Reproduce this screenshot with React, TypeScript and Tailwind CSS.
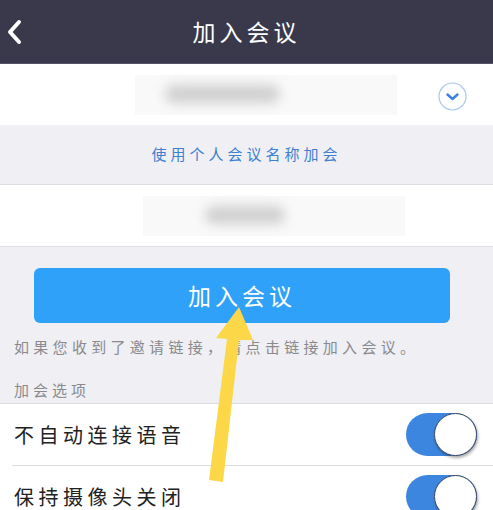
import React from 'react';

const font = { fontFamily: '"Noto Sans CJK SC", "Noto Sans", sans-serif' };

function Toggle() {
  return (
    <div className="relative h-[43px] w-[71px] rounded-full bg-[#3d86e0]">
      <div className="absolute right-0 top-0 h-[43px] w-[43px] rounded-full border border-[#3b4a66] bg-white shadow-[1px_2px_3px_rgba(0,0,0,0.35)]" />
    </div>
  );
}

function BlurField({ blob }: { blob: string }) {
  return (
    <div className="relative h-[40px] w-[262px] bg-[#f9f9f9]">
      <div className={`absolute top-[10px] h-[18px] rounded-full bg-[#cfcfcf] blur-[6px] ${blob}`} />
    </div>
  );
}

export default function App() {
  return (
    <div className="relative h-[510px] w-[493px] overflow-hidden bg-[#efeff4]" style={font}>
      {/* 顶部栏 */}
      <div className="relative flex h-16 items-center justify-center border-b border-[#55546a] bg-[#3a394c]">
        <svg className="absolute left-[6px] top-[19px]" width="16" height="26" viewBox="0 0 16 26">
          <path d="M13 3 L4 13 L13 23" fill="none" stroke="white" strokeWidth="4" strokeLinecap="round" strokeLinejoin="round" />
        </svg>
        <span className="text-[23px] tracking-[4px] text-white">加入会议</span>
      </div>

      {/* 会议号 */}
      <div className="relative flex h-[61px] items-center bg-white pl-[135px]">
        <BlurField blob="left-[30px] w-[115px]" />
        <svg className="absolute left-[438px] top-[18px]" width="29" height="29" viewBox="0 0 29 29">
          <circle cx="14.5" cy="14.5" r="13.5" fill="none" stroke="#a9c7ee" strokeWidth="1.2" />
          <path d="M9.5 12.5 L14.5 17 L19.5 12.5" fill="none" stroke="#3b82e0" strokeWidth="2.4" strokeLinecap="round" strokeLinejoin="round" />
        </svg>
      </div>

      <div className="flex h-[60px] items-center justify-center border-b border-[#dcdce2]">
        <span className="text-[15px] tracking-[4px] text-[#3d7fd0]">使用个人会议名称加会</span>
      </div>

      {/* 名称 */}
      <div className="flex h-[61px] items-center bg-white pl-[143px]">
        <BlurField blob="left-[62px] w-[80px]" />
      </div>

      {/* 按钮区域 */}
      <div className="border-t border-[#e3e3e8] pl-[34px] pr-[43px] pt-[21px]">
        <button className="flex h-[55px] w-full items-center justify-center rounded-md bg-[#2fa1f8] text-[23px] tracking-[4px] text-white">
          加入会议
        </button>
      </div>
      <p className="mt-[13px] pl-[14px] text-[15px] tracking-[4.3px] text-[#8a8a8e]">如果您收到了邀请链接，请点击链接加入会议。</p>
      <p className="mt-[20px] pl-[14px] text-[15px] tracking-[4px] text-[#8a8a8e]">加会选项</p>

      {/* 选项 */}
      <div className="mt-[2px] border-t border-[#dcdce2] bg-white">
        <div className="flex h-[61px] items-center justify-between pl-[14px] pr-[16px]">
          <span className="text-[20px] tracking-[4.5px] text-[#222]">不自动连接语音</span>
          <Toggle />
        </div>
        <div className="ml-[12px] border-t border-[#dedee2]" />
        <div className="flex h-[61px] items-center justify-between pl-[14px] pr-[16px]">
          <span className="text-[20px] tracking-[4.5px] text-[#222]">保持摄像头关闭</span>
          <Toggle />
        </div>
      </div>

      {/* 黄色箭头 */}
      <svg className="pointer-events-none absolute left-0 top-0" width="493" height="510" viewBox="0 0 493 510">
        <polygon points="239,307 253,340 239,340 223,482 209,480 227,339 216,338" fill="#fcd848" />
      </svg>
    </div>
  );
}
